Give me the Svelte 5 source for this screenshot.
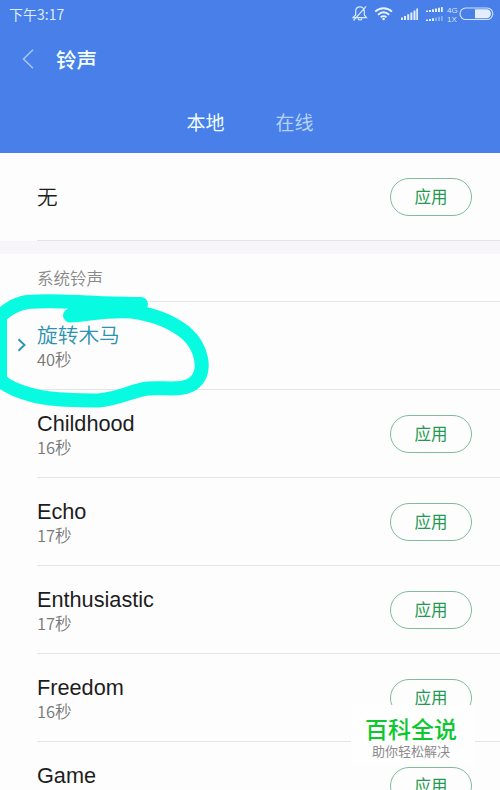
<script lang="ts">
  let tabs = ["本地", "在线"];
  let activeTab = "本地";

  let ringtones = [
    { name: "旋转木马", length: "40秒" },
    { name: "Childhood", length: "16秒" },
    { name: "Echo", length: "17秒" },
    { name: "Enthusiastic", length: "17秒" },
    { name: "Freedom", length: "16秒" },
    { name: "Game", length: "" },
  ];
  let selected = "旋转木马";

  function apply(name: string) {
    selected = name;
  }
</script>

<div class="phone">
  <header>
    <div class="status">
      <span class="time">下午3:17</span>
      <svg class="status-icons" width="148" height="28" viewBox="0 0 148 28" fill="none">
        <g stroke="#d5eafd" stroke-width="1.2">
          <path d="M3 17.700h13.500l-2.200-2.700v-4c0-5.500-8.600-5.500-8.600 0v4zM8 18.500c.5 2 3.500 2 4 0M16.200 6.300 3.500 20.500" />
        </g>
        <g stroke="#e8f5ff" stroke-width="1.800">
          <path d="M25.200 11.700c5-4.600 11.800-4.600 16.800 0M28 14.700c3.500-3 7.700-3 11.200 0M30.700 17.300c1.900-1.500 3.900-1.500 5.800 0" />
        </g>
        <circle cx="33.600" cy="19" r="1.300" fill="#e8f5ff" />
        <g fill="#e0f0ff">
          <path d="M51 17.500h2v2.500h-2zM54 16h2v4h-2zM57.200 14.300h2V20h-2zM60.400 12.500h2V20h-2zM63.500 10.500h2V20h-2zM66.300 8.500h1.700V20h-1.700z" />
          <path d="M76 10.500h2V12h-2zM79 10h2v2h-2zM82 9.200h2V12h-2zM85 8.500h2V12h-2zM88 7.700h2V12h-2zM91 7h1.800v5H91z" />
          <path d="M76 19.500h2V21h-2zM79 19h2v2h-2zM82 18.200h2V21h-2z" />
          <path opacity=".4" d="M85 17.500h2V21h-2zM88 16.700h2V21h-2zM91 16h1.800v5H91z" />
        </g>
        <text x="97" y="12.500">4G</text>
        <text x="97" y="21.500">1X</text>
        <rect x="110" y="8" width="32.800" height="11.500" rx="5.750" stroke="#cfe4fb" stroke-width="1.200" />
        <path d="M125 9.300h11.500a4.450 4.450 0 0 1 0 8.900H125z" fill="#e4edfc" />
      </svg>
    </div>
    <div class="title">
      <svg width="12" height="20" viewBox="0 0 12 20" fill="none" stroke="#a9c8f7" stroke-width="1.500">
        <path d="M11 .8 1.500 10 11 19.200" />
      </svg>
      <h1>铃声</h1>
    </div>
    <nav>
      {#each tabs as tab}
        <button class="tab" class:active={tab === activeTab} on:click={() => (activeTab = tab)}>{tab}</button>
      {/each}
    </nav>
  </header>

  <div class="row none">
    <div class="name">无</div>
    <button class="apply" on:click={() => apply("无")}>应用</button>
  </div>
  <div class="gap"></div>
  <div class="section">系统铃声</div>

  {#each ringtones as tone}
    <div class="row" class:selected={tone.name === selected}>
      {#if tone.name === selected}
        <svg class="marker" width="10" height="14" viewBox="0 0 10 14" fill="none" stroke="#2b93b0" stroke-width="1.900">
          <path d="m1.500 1.300 6 5.700-6 5.700" />
        </svg>
      {/if}
      <div class="info">
        <div class="name">{tone.name}</div>
        <div class="length">{tone.length}</div>
      </div>
      {#if tone.name !== selected}
        <button class="apply" on:click={() => apply(tone.name)}>应用</button>
      {/if}
    </div>
  {/each}

  <!-- hand drawn circle around the selected tone -->
  <svg class="scribble" width="220" height="120" viewBox="0 290 220 120" fill="none">
    <path
      d="M141 304C118 304.500 98 303 78 302C55 301 40 301 27 302C14 304 4 312 0 317V380C6 386 17 391 30 394.500C48 400 74 400 98 400.500C119 399 133 390 148 388.500C166 387 184 392 195 382C207 371 202 347 186 333C170 320 150 314 132 311.500C105 309.500 88 315 70 315.500"
      stroke="#08fbe1"
      stroke-width="14"
      stroke-linecap="round"
      stroke-linejoin="round"
    />
  </svg>

  <div class="watermark">
    <strong>百科全说</strong>
    <span>助你轻松解决</span>
  </div>
</div>

<style>
  :global(body) {
    margin: 0;
    background: #fdfdfd;
  }
  .phone {
    position: relative;
    width: 500px;
    height: 790px;
    overflow: hidden;
    background: #fdfdfd;
    font-family: "Noto Sans CJK SC", sans-serif;
    color: #1d1d1d;
  }
  button {
    padding: 0;
    background: none;
    border: none;
    font-family: inherit;
  }
  header {
    height: 153px;
    background: #487fe9;
  }
  .status {
    display: flex;
    justify-content: space-between;
    height: 28px;
    padding: 0 2px 0 9px;
  }
  .time {
    font-size: 14px;
    line-height: 29px;
    color: #dcecfd;
  }
  .status-icons {
    display: block;
  }
  .status-icons text {
    font: 8px "Liberation Sans", sans-serif;
    fill: #d5e8fd;
  }
  .title {
    display: flex;
    align-items: center;
    gap: 22px;
    height: 62px;
    padding-left: 22px;
  }
  h1 {
    margin: 0;
    font-size: 20.500px;
    font-weight: 500;
    line-height: 30px;
    color: #f4ffff;
  }
  nav {
    display: flex;
    justify-content: center;
    gap: 51px;
    height: 62px;
  }
  .tab {
    font-size: 19px;
    line-height: 63px;
    color: #b5d3fa;
  }
  .tab.active {
    color: #f0fdff;
  }
  .row {
    display: flex;
    align-items: center;
    position: relative;
    box-sizing: border-box;
    height: 88px;
    margin-left: 37px;
    padding-right: 28px;
    border-bottom: 1px solid #e4e4e6;
  }
  .info {
    padding-top: 2px;
  }
  .name {
    height: 26px;
    font-family: "Liberation Sans", "Noto Sans CJK SC", sans-serif;
    font-size: 21.700px;
    line-height: 27px;
  }
  .none .name,
  .selected .name {
    font-family: "Noto Sans CJK SC", sans-serif;
    font-size: 20.700px;
    font-weight: 350;
    line-height: 25px;
  }
  .selected .name {
    color: #2b93b0;
  }
  .length {
    height: 23px;
    font-size: 16.500px;
    font-weight: 350;
    line-height: 23px;
    color: #777;
  }
  .marker {
    position: absolute;
    left: -20px;
    top: 36px;
  }
  .apply {
    box-sizing: border-box;
    width: 82px;
    height: 38px;
    margin-left: auto;
    padding-bottom: 2px;
    border: 1px solid #7fbc9c;
    border-radius: 19px;
    font-size: 16.500px;
    line-height: 34px;
    color: #23994f;
  }
  .gap {
    height: 13px;
    background: #f7f5f9;
  }
  .section {
    box-sizing: border-box;
    height: 48px;
    margin-left: 37px;
    border-bottom: 1px solid #e4e4e6;
    font-size: 16.500px;
    font-weight: 350;
    line-height: 48px;
    color: #888;
  }
  .scribble {
    position: absolute;
    left: 0;
    top: 290px;
  }
  .watermark {
    position: absolute;
    left: 351px;
    top: 705px;
    display: flex;
    flex-direction: column;
    align-items: center;
    box-sizing: border-box;
    width: 124px;
    height: 60px;
    padding-right: 4px;
    background: #fefefe;
  }
  .watermark strong {
    padding-top: 8px;
    font-size: 23px;
    font-weight: 500;
    line-height: 30px;
    color: #0bc92c;
  }
  .watermark span {
    font-size: 13px;
    line-height: 15px;
    color: #8b8b8b;
  }
</style>
